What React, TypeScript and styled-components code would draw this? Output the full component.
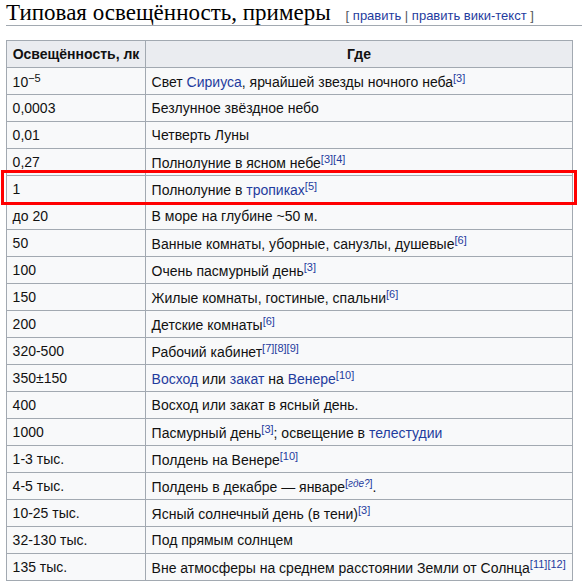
import React from 'react';
import styled, { createGlobalStyle } from 'styled-components';

const GlobalStyle = createGlobalStyle`
  html, body { margin: 0; padding: 0; background: #fff; }
  body { font-family: 'Liberation Sans', Arial, sans-serif; color: #111; }
`;

const Page = styled.div`
  position: relative;
  width: 582px;
  height: 582px;
  overflow: hidden;
  padding-left: 6px;
  box-sizing: border-box;
`;

const Heading = styled.h2`
  margin: 0;
  padding-top: 1px;
  height: 24px;
  border-bottom: 1px solid #a2a9b1;
  display: flex;
  align-items: baseline;
  white-space: nowrap;
`;

const HeadingText = styled.span`
  font-family: 'Liberation Serif', 'Times New Roman', serif;
  font-weight: normal;
  font-size: 23px;
  line-height: 23px;
  color: #000;
`;

const EditLinks = styled.span`
  margin-left: 15px;
  font-family: 'Liberation Sans', Arial, sans-serif;
  font-weight: normal;
  font-size: 13px;
  color: #54595d;
`;

const Link = styled.a`
  color: #1f3c9e;
  text-decoration: none;
`;

const Table = styled.table`
  margin-top: 14px;
  width: 567px;
  border-collapse: collapse;
  background: #f8f9fa;
  border: 1px solid #a2a9b1;
  font-family: 'Liberation Sans', Arial, sans-serif;
  font-size: 14px;
  color: #111;
  table-layout: fixed;
`;

const HeadCell = styled.th<{ $width?: number }>`
  box-sizing: border-box;
  background: #eaecf0;
  border: 1px solid #a2a9b1;
  height: 27px;
  padding: 0 5.6px;
  font-weight: bold;
  text-align: center;
  width: ${({ $width }) => ($width ? `${$width}px` : 'auto')};
`;

const Cell = styled.td`
  box-sizing: border-box;
  border: 1px solid #a2a9b1;
  height: 27px;
  padding: 0 5.6px;
  white-space: nowrap;
`;

const Sup = styled.sup`
  font-size: 11px;
  line-height: 1;
  vertical-align: 5px;
  a { color: #1f3c9e; text-decoration: none; }
`;

const Note = styled.i`
  font-size: 10px;
`;

const Highlight = styled.div`
  position: absolute;
  left: 1px;
  top: 170px;
  width: 576px;
  height: 35px;
  border: 3px solid #f00;
  box-sizing: border-box;
  pointer-events: none;
`;

const Ref = ({ n }: { n: number[] }) => (
  <Sup>
    {n.map(x => (
      <Link key={x} href="#">[{x}]</Link>
    ))}
  </Sup>
);

type Row = { lux: React.ReactNode; where: React.ReactNode };

const rows: Row[] = [
  { lux: <>10<Sup>−5</Sup></>, where: <>Свет <Link href="#">Сириуса</Link>, ярчайшей звезды ночного неба<Ref n={[3]} /></> },
  { lux: '0,0003', where: 'Безлунное звёздное небо' },
  { lux: '0,01', where: 'Четверть Луны' },
  { lux: '0,27', where: <>Полнолуние в ясном небе<Ref n={[3, 4]} /></> },
  { lux: '1', where: <>Полнолуние в <Link href="#">тропиках</Link><Ref n={[5]} /></> },
  { lux: 'до 20', where: 'В море на глубине ~50 м.' },
  { lux: '50', where: <>Ванные комнаты, уборные, санузлы, душевые<Ref n={[6]} /></> },
  { lux: '100', where: <>Очень пасмурный день<Ref n={[3]} /></> },
  { lux: '150', where: <>Жилые комнаты, гостиные, спальни<Ref n={[6]} /></> },
  { lux: '200', where: <>Детские комнаты<Ref n={[6]} /></> },
  { lux: '320-500', where: <>Рабочий кабинет<Ref n={[7, 8, 9]} /></> },
  { lux: '350±150', where: <><Link href="#">Восход</Link> или <Link href="#">закат</Link> на <Link href="#">Венере</Link><Ref n={[10]} /></> },
  { lux: '400', where: 'Восход или закат в ясный день.' },
  { lux: '1000', where: <>Пасмурный день<Ref n={[3]} />; освещение в <Link href="#">телестудии</Link></> },
  { lux: '1-3 тыс.', where: <>Полдень на Венере<Ref n={[10]} /></> },
  { lux: '4-5 тыс.', where: <>Полдень в декабре — январе<Sup><Link href="#">[<Note>где?</Note>]</Link></Sup>.</> },
  { lux: '10-25 тыс.', where: <>Ясный солнечный день (в тени)<Ref n={[3]} /></> },
  { lux: '32-130 тыс.', where: 'Под прямым солнцем' },
  { lux: '135 тыс.', where: <>Вне атмосферы на среднем расстоянии Земли от Солнца<Ref n={[11, 12]} /></> },
];

export default function App() {
  return (
    <>
      <GlobalStyle />
      <Page>
        <Heading>
          <HeadingText>Типовая освещённость, примеры</HeadingText>
          <EditLinks>
            [ <Link href="#">править</Link> | <Link href="#">править вики-текст</Link> ]
          </EditLinks>
        </Heading>
        <Table>
          <thead>
            <tr>
              <HeadCell $width={139}>Освещённость, лк</HeadCell>
              <HeadCell>Где</HeadCell>
            </tr>
          </thead>
          <tbody>
            {rows.map((r, i) => (
              <tr key={i}>
                <Cell>{r.lux}</Cell>
                <Cell>{r.where}</Cell>
              </tr>
            ))}
          </tbody>
        </Table>
        <Highlight />
      </Page>
    </>
  );
}
